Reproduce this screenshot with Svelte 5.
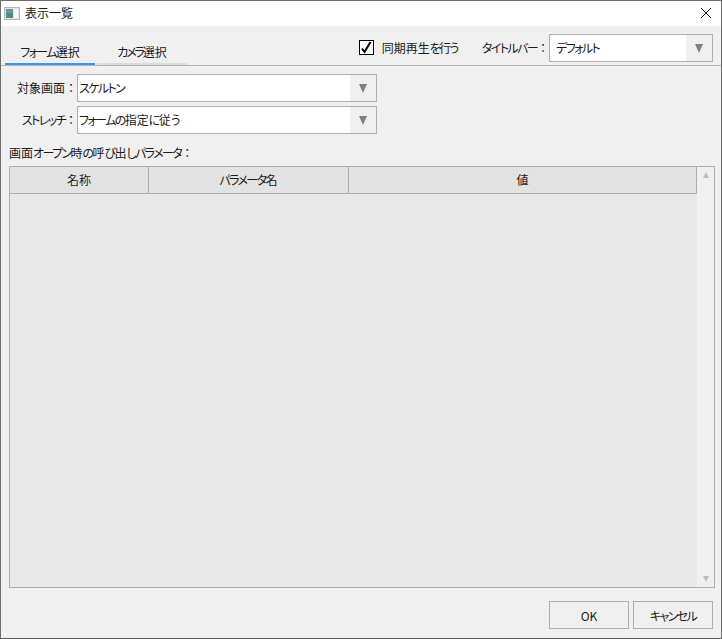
<script lang="ts">
  const columns = [
    { name: 'name', width: 139 },
    { name: 'param', width: 200 },
    { name: 'value', width: 348 }
  ];
</script>

<div class="window">
  <header class="titlebar">
    <svg class="app-icon" width="16" height="14" viewBox="0 0 16 14">
      <rect x="0.5" y="1.5" width="15" height="12" fill="#e4e4e4" stroke="#b4b4b4" />
      <rect x="2" y="3" width="7" height="9" fill="#4d9080" />
      <rect x="2" y="3" width="7" height="4" fill="#6a94ad" />
      <rect x="10" y="3" width="4" height="9" fill="#f8f8f8" />
    </svg>
    <span class="title">表示一覧</span>
    <svg class="close" width="12" height="12" viewBox="0 0 12 12">
      <path d="M1 1 L11 11 M11 1 L1 11" stroke="#111" stroke-width="1" fill="none" />
    </svg>
  </header>

  <div class="tabbar">
    <div class="tabs">
      <div class="tab active"><span class="k">フォーム</span>選択</div>
      <div class="tab"><span class="k wide">カメラ</span>選択</div>
    </div>
    <div class="tab-tools">
      <label class="check">
        <span class="box">
          <svg width="12" height="13" viewBox="0 0 12 13">
            <path d="M2 7.5 L4.5 11 L10.5 1" stroke="#000" stroke-width="2" fill="none" />
          </svg>
        </span>
        <span>同期再生<span class="k">を行う</span></span>
      </label>
      <span class="tool-label"><span class="k">タイトルバー</span><span class="colon">：</span></span>
      <div class="combo title-combo">
        <span class="value k">デフォルト</span>
        <span class="arrow"><i></i></span>
      </div>
    </div>
  </div>

  <main class="content">
    <div class="field">
      <span class="field-label">対象画面<span class="colon">：</span></span>
      <div class="combo">
        <span class="value k">スケルトン</span>
        <span class="arrow"><i></i></span>
      </div>
    </div>
    <div class="field">
      <span class="field-label"><span class="k">ストレッチ</span><span class="colon">：</span></span>
      <div class="combo">
        <span class="value"><span class="k">フォームの</span>指定<span class="k">に</span>従<span class="k">う</span></span>
        <span class="arrow"><i></i></span>
      </div>
    </div>

    <div class="section-label">画面<span class="k">オープン</span>時<span class="k">の</span>呼<span class="k">び</span>出<span class="k">しパラメータ</span><span class="colon">：</span></div>

    <div class="table">
      <div class="table-main">
        <div class="thead">
          {#each columns as col}
            <div class="th" style="width: {col.width}px">
              {#if col.name === 'name'}名称{:else if col.name === 'param'}<span class="k">パラメータ</span>名{:else}値{/if}
            </div>
          {/each}
        </div>
        <div class="tbody"></div>
      </div>
      <div class="scrollbar">
        <i class="up"></i>
        <i class="down"></i>
      </div>
    </div>
  </main>

  <footer class="footer">
    <button class="btn">OK</button>
    <button class="btn k">キャンセル</button>
  </footer>
</div>

<style>
  :global(body) { margin: 0; background: #f0f0f0; }
  .window { box-sizing: border-box; width: 722px; height: 639px; display: flex; flex-direction: column; background: #f0f0f0; border: 1px solid #6e6e6e; border-bottom-color: #5a5a5a; font-family: "Noto Sans CJK JP", "Noto Sans", sans-serif; font-size: 12px; font-feature-settings: "palt"; color: #1a1a1a; }

  /* kana sit narrower than kanji in the original UI font */
  .k { letter-spacing: -1.6px; }
  .k.wide { letter-spacing: -2.2px; }
  .colon { font-feature-settings: normal; }

  .titlebar { height: 25px; flex: none; display: flex; align-items: center; background: #fff; padding: 0 9px 2px 3px; box-sizing: border-box; }
  .app-icon { flex: none; }
  .title { margin-left: 5px; }
  .close { margin-left: auto; }

  .tabbar { height: 40px; flex: none; box-sizing: border-box; display: flex; justify-content: space-between; border-bottom: 1px solid #b4b4b4; padding: 0 8px 0 4px; }
  .tabs { display: flex; gap: 2px; align-items: flex-end; }
  .tab { width: 90px; height: 28px; box-sizing: border-box; padding-top: 6px; text-align: center; border-bottom: 2px solid #dcdcdc; }
  .tab.active { border-bottom-color: #3c96ee; }
  .tab-tools { display: flex; align-items: center; padding: 8px 0 3px; }

  .check { display: flex; align-items: center; gap: 8px; margin: 0 24px 2px 0; }
  .box { width: 13px; height: 13px; border: 1px solid #000; background: #fff; display: flex; align-items: center; justify-content: center; }
  .tool-label { margin-bottom: 2px; }

  .combo { width: 300px; height: 28px; box-sizing: border-box; display: flex; background: #fff; border: 1px solid #aeaeae; }
  .title-combo { width: 164px; }
  .title-combo .value { padding-left: 6px; }
  .value { flex: 1; padding-left: 1px; line-height: 25px; }
  .arrow { width: 26px; display: flex; align-items: center; justify-content: center; background: #f0f0f0; }
  .arrow i { width: 0; height: 0; border-left: 4.5px solid transparent; border-right: 4.5px solid transparent; border-top: 9px solid #808080; }

  .content { flex: 1; min-height: 0; display: flex; flex-direction: column; padding: 8px 6px 0 8px; }
  .field { display: flex; align-items: center; margin-bottom: 4px; }
  .field-label { width: 68px; margin-bottom: 2px; text-align: right; white-space: nowrap; }
  .section-label { margin-top: 6px; height: 18px; line-height: 18px; }

  .table { margin-top: 4px; height: 422px; box-sizing: border-box; display: flex; background: #e9e9e9; border: 1px solid #aeaeae; }
  .table-main { flex: 1; display: flex; flex-direction: column; }
  .thead { height: 27px; box-sizing: border-box; display: flex; background: #e3e3e3; border-bottom: 1px solid #aeaeae; }
  .th { box-sizing: border-box; line-height: 25px; text-align: center; border-right: 1px solid #aeaeae; }
  .tbody { flex: 1; }
  .scrollbar { width: 17px; display: flex; flex-direction: column; justify-content: space-between; align-items: center; background: #f0f0f0; padding: 5px 0; box-sizing: border-box; }
  .scrollbar i { width: 0; height: 0; border-left: 3px solid transparent; border-right: 3px solid transparent; }
  .scrollbar .up { border-bottom: 6px solid #bdbdbd; }
  .scrollbar .down { border-top: 6px solid #bdbdbd; }

  .footer { height: 50px; flex: none; box-sizing: border-box; display: flex; justify-content: flex-end; gap: 4px; padding: 13px 8px 0 0; }
  .btn { width: 80px; height: 28px; background: #f0f0f0; border: 1px solid #aeaeae; font-family: inherit; font-size: inherit; font-feature-settings: inherit; color: #1a1a1a; padding: 0; }
</style>
